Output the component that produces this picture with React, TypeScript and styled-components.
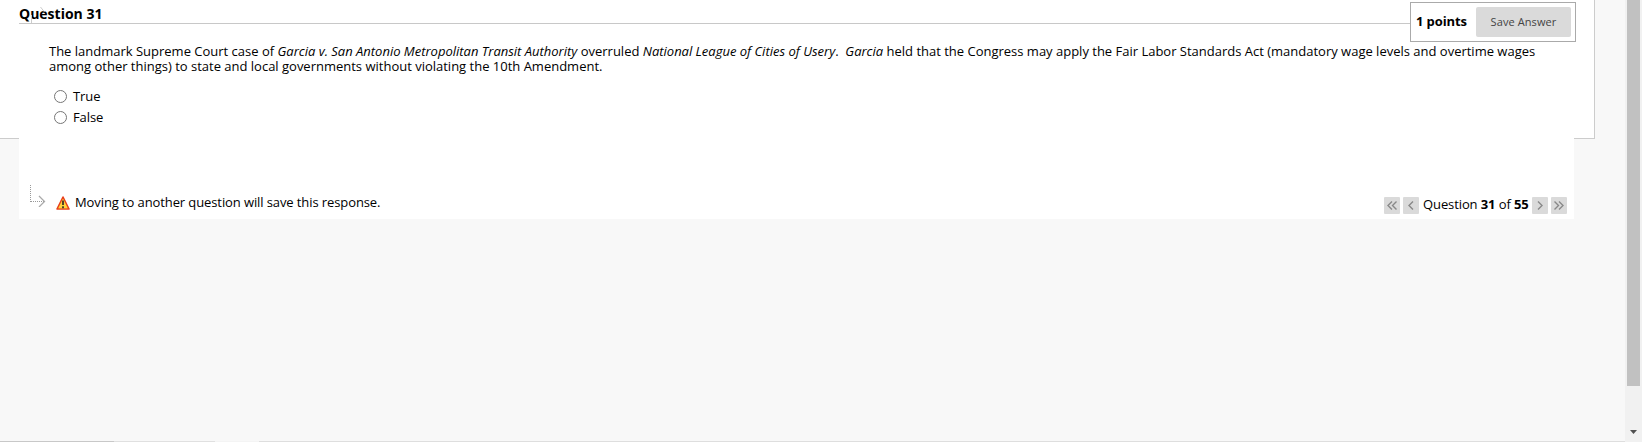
import React, { useState } from "react";
import styled, { createGlobalStyle } from "styled-components";

const GlobalStyle = createGlobalStyle`
  * {
    box-sizing: border-box;
  }
  body {
    margin: 0;
    overflow: hidden;
    background: #f8f8f8;
    color: #000;
    font: 13px/15px "Open Sans", sans-serif;
  }
`;

const Page = styled.div`
  display: flex;
  height: 442px;
`;

const Main = styled.main`
  display: flex;
  flex: 1;
  flex-direction: column;
  justify-content: space-between;
`;

const Panel = styled.section`
  width: 1595px;
  height: 139px;
  padding-left: 19px;
  background: #fff;
  border: solid #ccc;
  border-width: 0 1px 1px 0;
`;

// taller than the panel, so it covers part of the bottom border
const Content = styled.div`
  position: relative;
  display: flex;
  flex-direction: column;
  width: 1555px;
  height: 219px;
  background: #fff;
`;

const Heading = styled.h3`
  position: relative;
  height: 24px;
  margin: 0;
  padding-top: 4px;
  border-bottom: 1px solid #c8c8c8;
  font-size: 14px;
  line-height: 19px;
`;

const HeadingMark = styled.svg`
  position: absolute;
  left: 12px;
  top: 7px;
`;

const PointsBox = styled.div`
  position: absolute;
  top: 2px;
  right: -2px;
  display: flex;
  align-items: center;
  justify-content: space-between;
  width: 166px;
  height: 40px;
  padding: 0 4px 0 5px;
  background: #fff;
  border: 1px solid #aaa;
  font-weight: 700;
`;

const Points = styled.span`
  margin-top: -2px;
  letter-spacing: -0.1px;
`;

const SaveButton = styled.button`
  width: 95px;
  height: 30px;
  padding: 0 0 2px;
  border: 0;
  border-radius: 2px;
  background: #dadada;
  color: #444;
  font: 11px/15px "Open Sans", sans-serif;
  letter-spacing: 0.1px;
`;

const Prompt = styled.p`
  margin: 20px 0 0 30px;
  letter-spacing: -0.004px;
  white-space: nowrap;
`;

const Options = styled.div`
  display: flex;
  flex-direction: column;
  gap: 6px;
  margin: 15px 0 0 35px;
`;

const Option = styled.label`
  display: flex;
  align-items: center;
  gap: 6px;
  height: 15px;
  letter-spacing: -0.1px;
`;

const Radio = styled.input`
  width: 13px;
  height: 13px;
  margin: 0;
`;

const Footer = styled.footer`
  display: flex;
  justify-content: space-between;
  align-items: flex-start;
  margin-top: auto;
  height: 34px;
  padding: 0 7px 0 11px;
`;

const Notice = styled.div`
  display: flex;
  align-items: flex-start;
`;

const NoticeText = styled.span`
  margin: 10px 0 0 5px;
  letter-spacing: -0.1px;
`;

const WarningIcon = styled.svg`
  margin: 11px 0 0 10px;
`;

const Pager = styled.nav`
  display: flex;
  align-items: center;
  gap: 3px;
  margin-top: 12px;
`;

const PagerText = styled.span`
  width: 105px;
  margin: -3px 1px 0;
  letter-spacing: -0.1px;
  white-space: nowrap;
`;

const PagerButton = styled.button`
  display: flex;
  align-items: center;
  justify-content: center;
  width: 16px;
  height: 17px;
  padding: 0;
  border: 0;
  border-radius: 1px;
  background: #dadada;
`;

const StatusLine = styled.div`
  display: flex;
  height: 1px;
`;

const Segment = styled.div<{ $width?: number; $color: string }>`
  flex: ${(p) => (p.$width ? `0 0 ${p.$width}px` : "1")};
  background: ${(p) => p.$color};
`;

const Scrollbar = styled.div`
  display: flex;
  flex-direction: column;
  justify-content: space-between;
  align-items: center;
  width: 17px;
  padding-bottom: 8px;
  background: #f1f1f1;
`;

const Thumb = styled.div`
  width: 13px;
  height: 386px;
  background: #c1c1c1;
`;

const Chevrons = ({ d }: { d: string }) => (
  <svg width="10" height="9" fill="none" stroke="#888" strokeWidth="1.4">
    <path d={d} />
  </svg>
);

const App = () => {
  const [answer, setAnswer] = useState("");

  return (
    <Page>
      <GlobalStyle />
      <Main>
        <Panel>
          <Content>
            <Heading>
              <HeadingMark width="14" height="16" fill="none" stroke="#ccc">
                <path d="M.5 8v8M9.500 0l4 5" />
              </HeadingMark>
              Question 31
            </Heading>
            <PointsBox>
              <Points>1 points</Points>
              <SaveButton>Save Answer</SaveButton>
            </PointsBox>
            <Prompt>
              The landmark Supreme Court case of{" "}
              <em>Garcia v. San Antonio Metropolitan Transit Authority</em>{" "}
              overruled <em>National League of Cities of Usery</em>.&nbsp;{" "}
              <em>Garcia</em> held that the Congress may apply the Fair Labor
              Standards Act (mandatory wage levels and overtime wages
              <br />
              among other things) to state and local governments without
              violating the 10th Amendment.
            </Prompt>
            <Options>
              {["True", "False"].map((o) => (
                <Option key={o}>
                  <Radio
                    type="radio"
                    name="answer"
                    checked={answer === o}
                    onChange={() => setAnswer(o)}
                  />
                  {o}
                </Option>
              ))}
            </Options>
            <Footer>
              <Notice>
                <svg width="16" height="22" fill="none" stroke="#999">
                  <path d="M.5 0v17M1 16.500h13" strokeDasharray="1 1" />
                  <path
                    d="M9 11l5.500 5.500L9 22"
                    stroke="#aaa"
                    strokeWidth="1.3"
                  />
                </svg>
                <WarningIcon width="14" height="14" viewBox="0 0 14 14">
                  <path
                    d="M7 1L13 13H1z"
                    fill="#fdc02f"
                    stroke="#e8401c"
                    strokeWidth="1.6"
                    strokeLinejoin="round"
                  />
                  <path d="M7 3L11.500 12.200H2.500z" fill="#ffd23c" />
                  <path d="M7 4.500v4.500M7 10.200v2" stroke="#222" strokeWidth="1.6" />
                </WarningIcon>
                <NoticeText>
                  Moving to another question will save this response.
                </NoticeText>
              </Notice>
              <Pager>
                <PagerButton>
                  <Chevrons d="M5 .5l-4 4 4 4M9.500 .5l-4 4 4 4" />
                </PagerButton>
                <PagerButton>
                  <Chevrons d="M7 .5l-4 4 4 4" />
                </PagerButton>
                <PagerText>
                  Question <b>31</b> of <b>55</b>
                </PagerText>
                <PagerButton>
                  <Chevrons d="M3 .5l4 4-4 4" />
                </PagerButton>
                <PagerButton>
                  <Chevrons d="M.5 .5l4 4-4 4M5 .5l4 4-4 4" />
                </PagerButton>
              </Pager>
            </Footer>
          </Content>
        </Panel>
        <StatusLine>
          <Segment $width={114} $color="#c8c8c8" />
          <Segment $width={101} $color="#e0e0e0" />
          <Segment $width={44} $color="#f4f4f4" />
          <Segment $color="#dedede" />
        </StatusLine>
      </Main>
      <Scrollbar>
        <Thumb />
        <svg width="7" height="4" fill="#505050">
          <path d="M0 0h7L3.500 4z" />
        </svg>
      </Scrollbar>
    </Page>
  );
};

export default App;
